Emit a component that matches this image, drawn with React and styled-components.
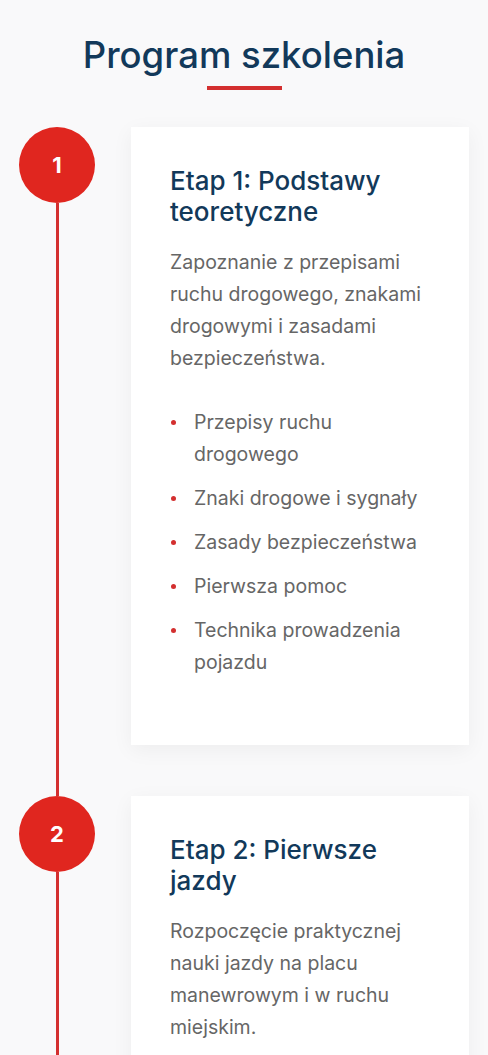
import React from 'react'
import styled, { createGlobalStyle } from 'styled-components'

const GlobalStyle = createGlobalStyle`
  * { box-sizing: border-box; }
  body {
    margin: 0;
    background: #f9f9fa;
    font-family: Inter, "Noto Sans", sans-serif;
    -webkit-font-smoothing: antialiased;
  }
`

const stages = [
  {
    title: 'Etap 1: Podstawy teoretyczne',
    text: 'Zapoznanie z przepisami ruchu drogowego, znakami drogowymi i zasadami bezpieczeństwa.',
    items: [
      'Przepisy ruchu drogowego',
      'Znaki drogowe i sygnały',
      'Zasady bezpieczeństwa',
      'Pierwsza pomoc',
      'Technika prowadzenia pojazdu',
    ],
  },
  {
    title: 'Etap 2: Pierwsze jazdy',
    text: 'Rozpoczęcie praktycznej nauki jazdy na placu manewrowym i w ruchu miejskim.',
    items: [
      'Obsługa pojazdu',
      'Manewry na placu',
      'Jazda w ruchu miejskim',
    ],
  },
]

export default function App() {
  return (
    <>
      <GlobalStyle />
      <SSection>
        <STitle>Program szkolenia</STitle>
        <SUnderline />
        <STimeline>
          {stages.map((s, i) => (
            <SItem key={i}>
              <SMarker>
                <SCircle>{i + 1}</SCircle>
                <SConnector />
              </SMarker>
              <SCard>
                <h3>{s.title}</h3>
                <p>{s.text}</p>
                <ul>
                  {s.items.map((it) => (
                    <li key={it}>{it}</li>
                  ))}
                </ul>
              </SCard>
            </SItem>
          ))}
        </STimeline>
      </SSection>
    </>
  )
}

const SSection = styled.section`
  padding: 34px 19px 0;
  display: flex;
  flex-direction: column;
  align-items: center;
`

const STitle = styled.h2`
  margin: 0;
  font-size: 36.5px;
  line-height: 1.2;
  font-weight: 500;
  color: #12395a;
  text-align: center;
`

const SUnderline = styled.div`
  width: 75px;
  height: 4px;
  margin-top: 8px;
  background: #d32f2f;
`

const STimeline = styled.div`
  width: 100%;
  margin-top: 37px;
  display: flex;
  flex-direction: column;
`

const SItem = styled.div`
  display: flex;
  gap: 36px;
  padding-bottom: 51px;
`

const SMarker = styled.div`
  flex: 0 0 76px;
  display: flex;
  flex-direction: column;
  align-items: center;
`

const SCircle = styled.div`
  width: 76px;
  height: 76px;
  border-radius: 50%;
  background: #e0261f;
  color: #fff;
  font-size: 22px;
  font-weight: 700;
  display: flex;
  align-items: center;
  justify-content: center;
  flex-shrink: 0;
`

const SConnector = styled.div`
  flex: 1;
  width: 3px;
  margin-bottom: -51px;
  background: #d32f2f;
`

const SCard = styled.div`
  flex: 1;
  background: #fff;
  padding: 38px 30px 40px 39px;
  box-shadow: 0 5px 20px rgba(0, 0, 0, 0.05);

  h3 {
    margin: 0 0 19px;
    font-size: 26px;
    line-height: 31px;
    font-weight: 500;
    color: #12395a;
  }

  p {
    margin: 0 0 32px;
    font-size: 19.5px;
    line-height: 32px;
    color: #666;
  }

  ul {
    margin: 0 0 27px;
    padding: 0;
    list-style: none;
  }

  li {
    position: relative;
    padding-left: 24px;
    font-size: 19.5px;
    line-height: 32px;
    color: #666;
    & + li { margin-top: 12px; }
    &::before {
      content: '';
      position: absolute;
      left: 1px;
      top: 14px;
      width: 5px;
      height: 5px;
      border-radius: 50%;
      background: #d32f2f;
    }
  }
`
